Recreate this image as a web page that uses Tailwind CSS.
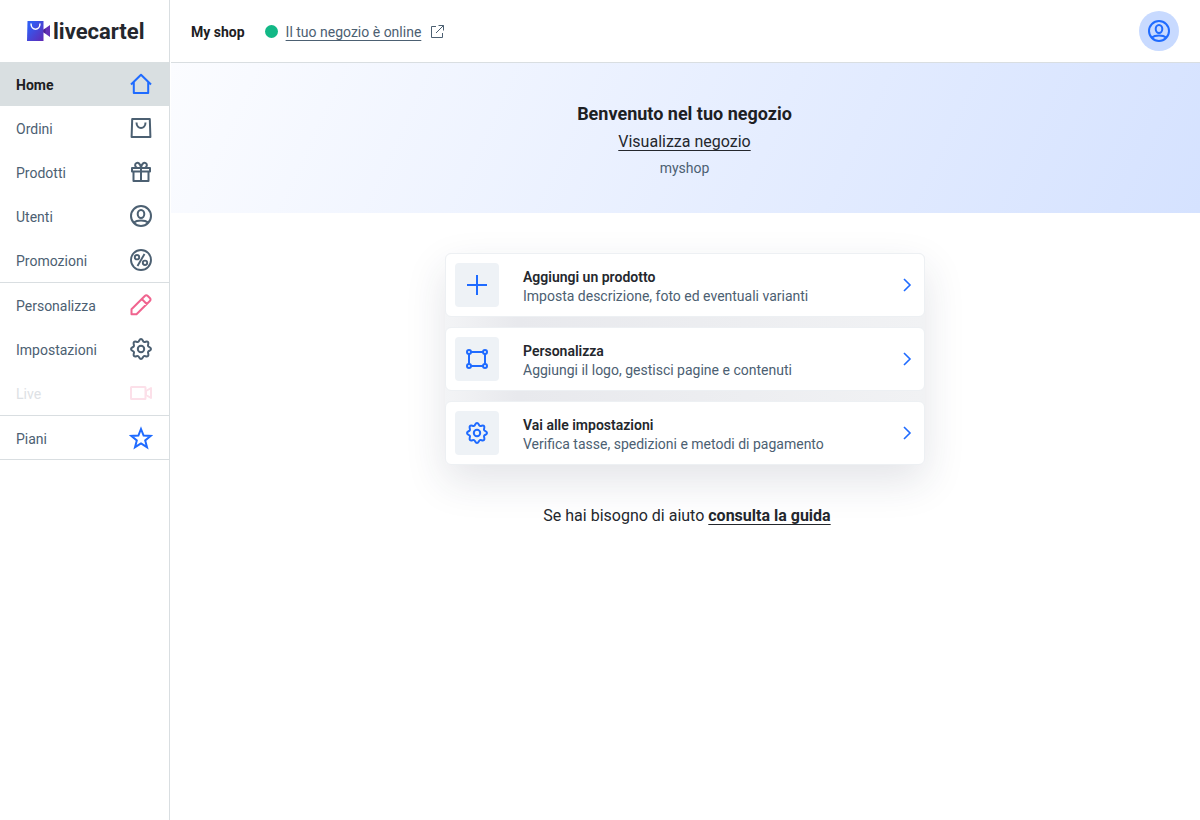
<!DOCTYPE html>
<html lang="it">
<head>
<meta charset="utf-8">
<meta name="viewport" content="width=device-width, initial-scale=1">
<title>Livecartel</title>
<script src="https://cdn.jsdelivr.net/npm/@tailwindcss/browser@4"></script>
</head>
<body class="flex min-h-screen bg-white font-['Roboto','Noto_Sans',sans-serif] text-sm text-[#4c6072]">
<svg class="hidden" aria-hidden="true">
  <symbol id="user" viewBox="0 0 24 24" fill="none" stroke="currentColor" stroke-width="2"><circle cx="12" cy="12" r="10"/><ellipse cx="12" cy="10" rx="3.300" ry="4"/><path d="M4.600 18.600C6.500 17.200 9 16.600 12 16.600s5.500.6 7.400 2"/></symbol>
  <symbol id="gear" viewBox="0 0 24 24" fill="none" stroke="currentColor" stroke-width="2" stroke-linejoin="round"><circle cx="12" cy="12" r="3.200"/><path d="M12 2C13.800 2 13.600 4.300 14.900 4.900S17.800 3.700 19 5s-.5 2.800.1 4.100S22 10.200 22 12s-2.400 1.600-2.900 2.900S20.300 17.700 19 19s-2.800-.5-4.100.1S13.800 22 12 22s-1.600-2.400-2.900-2.900S6.300 20.300 5 19s.5-2.800-.1-4.100S2 13.800 2 12s2.400-1.600 2.900-2.900S3.700 6.300 5 5s2.800.5 4.100-.1S10.200 2 12 2z"/></symbol>
  <symbol id="chevron" viewBox="0 0 16 16" fill="none" stroke="currentColor" stroke-width="1.600"><path d="M5 2l6 6-6 6"/></symbol>
</svg>

<aside class="w-[170px] shrink-0 border-r border-[#d9dee1]">
  <a href="#" aria-label="livecartel" class="flex h-[62px] items-center gap-0.5 pl-[27px] text-[#24272d]">
    <svg class="h-5 w-6 shrink-0" viewBox="0 0 24 20">
      <defs><linearGradient id="bag" x1="0" y1="0" x2="1" y2="1"><stop offset=".2" stop-color="#315cf2"/><stop offset="1" stop-color="#6129b4"/></linearGradient></defs>
      <path d="M.5 0H16.500v20H0z" fill="url(#bag)"/><path d="M16 9L23 4v12l-7-5z" fill="#6330b6"/><path d="M16.500 8.500l2-1v5l-2-1z" fill="#492395"/>
      <path d="M4 2.500c0 7.500 9 7.500 9 0" fill="none" stroke="#fff" stroke-width="1.500"/>
    </svg>
    <span class="pt-0.5 text-[22px] leading-6 font-bold">livecartel</span>
  </a>
  <nav aria-label="Menu principale">
    <ul class="border-b border-[#d9dee1]">
      <li><a href="#" aria-current="page" class="flex h-11 items-center justify-between bg-[#d9dfe1] px-4 font-bold text-[#1d2023]"><span class="pt-0.5">Home</span>
        <svg class="size-6 text-[#1f6bff]" viewBox="0 0 24 24" fill="none" stroke="currentColor" stroke-width="2" stroke-linejoin="round"><path d="M2 12.500L12 2.800 22 12.500M4.800 10v11h14.400V10"/></svg></a></li>
      <li><a href="#" class="flex h-11 items-center justify-between px-4"><span class="pt-0.5">Ordini</span>
        <svg class="size-6" viewBox="0 0 24 24" fill="none" stroke="currentColor" stroke-width="2" stroke-linejoin="round"><path d="M3.200 3h17.600l.6 18H2.600zM7.500 6.500c0 7.300 9 7.300 9 0"/></svg></a></li>
      <li><a href="#" class="flex h-11 items-center justify-between px-4"><span class="pt-0.5">Prodotti</span>
        <svg class="size-6" viewBox="0 0 24 24" fill="none" stroke="currentColor" stroke-width="2" stroke-linejoin="round"><path d="M3 8h18v3.500H3zM4.500 11.500V21h15v-9.500M12 8v13M12 7.500c-1-4.500-3-5.200-4.700-4.300C5.300 4.300 6 6.800 8 7.800M12 7.500c1-4.500 3-5.200 4.700-4.300C18.700 4.300 18 6.800 16 7.800"/></svg></a></li>
      <li><a href="#" class="flex h-11 items-center justify-between px-4"><span class="pt-0.5">Utenti</span>
        <svg class="size-6"><use href="#user"/></svg></a></li>
      <li><a href="#" class="flex h-11 items-center justify-between px-4"><span class="pt-0.5">Promozioni</span>
        <svg class="size-6" viewBox="0 0 24 24" fill="none" stroke="currentColor" stroke-width="1.900"><circle cx="12" cy="12" r="10"/><circle cx="8" cy="9.200" r="2.200"/><circle cx="16" cy="14.800" r="2.200"/><path d="M15.500 6l-7 12"/></svg></a></li>
    </ul>
    <ul class="border-b border-[#d9dee1]">
      <li><a href="#" class="flex h-11 items-center justify-between px-4"><span class="pt-0.5">Personalizza</span>
        <svg class="size-6 text-[#f0648f]" viewBox="0 0 24 24" fill="none" stroke="currentColor" stroke-width="2" stroke-linejoin="round"><path d="M2.500 21.300v-5L15.800 3c1-1 2-1 3 0l2 2c1 1 1 2 0 3L7.500 21.300zM12.800 6l5.200 5.200"/></svg></a></li>
      <li><a href="#" class="flex h-11 items-center justify-between px-4"><span class="pt-0.5">Impostazioni</span>
        <svg class="size-6"><use href="#gear"/></svg></a></li>
      <li><a href="#" aria-disabled="true" class="flex h-11 items-center justify-between px-4 text-[#dde1e5]"><span class="pt-0.5">Live</span>
        <svg class="size-6 text-[#fce0e9]" viewBox="0 0 24 24" fill="none" stroke="currentColor" stroke-width="2" stroke-linejoin="round"><rect x="2" y="6" width="14.500" height="12" rx=".5"/><path d="M17 10l5-3v10l-5-3z"/></svg></a></li>
    </ul>
    <ul class="border-b border-[#d9dee1]">
      <li><a href="#" class="flex h-[43px] items-center justify-between px-4"><span class="pt-0.5">Piani</span>
        <svg class="size-6 text-[#1f6bff]" viewBox="0 0 24 24" fill="none" stroke="currentColor" stroke-width="2"><path d="M12 3l2.600 6.500 7 .4-5.400 4.500 1.800 6.800-6-3.800-6 3.800 1.800-6.800L2.400 9.900l7-.4z"/></svg></a></li>
    </ul>
  </nav>
</aside>

<div class="ml-px flex-1">
  <header class="flex h-[63px] items-center border-b border-[#d9dee1] pr-[21px] pl-5">
    <strong class="pt-0.5 font-bold text-[#1d2023]">My shop</strong>
    <span class="ml-5 size-[13px] rounded-full bg-[#12b886]"></span>
    <a href="#" class="ml-2 flex items-center gap-2.5"><span class="pt-0.5 underline underline-offset-3">Il tuo negozio è online</span>
      <svg class="size-[13px]" viewBox="0 0 13 13" fill="none" stroke="currentColor" stroke-width="1"><path d="M5 1.500H.5v11h11V8M7.500.5h5v5M12.500.5L5 8"/></svg></a>
    <button type="button" aria-label="Profilo" class="ml-auto flex size-10 items-center justify-center rounded-full bg-[#c8daff] text-[#1f6bff]"><svg class="size-6"><use href="#user"/></svg></button>
  </header>
  <main>
    <section class="flex h-[150px] flex-col items-center bg-linear-115 from-[#fbfcff] to-[#d5e2ff] pt-[37px] pr-0.5">
      <h1 class="text-lg leading-7 font-bold text-[#1d2023]">Benvenuto nel tuo negozio</h1>
      <a href="#" class="text-base leading-7 text-[#24272d] underline underline-offset-3">Visualizza negozio</a>
      <p class="leading-6">myshop</p>
    </section>
    <div class="pt-10 pr-px">
    <ul class="mx-auto flex max-w-[480px] flex-col gap-2.5 rounded-md bg-linear-to-r from-[#f3f4f6] from-0% via-[#e8e9ed] via-15% to-[#f1f2f4] to-100% shadow-[0_16px_40px_rgba(40,50,80,0.13)]">
      <li><a href="#" class="flex h-16 items-center rounded-md border border-[#edf0f3] bg-white pr-[9px] pl-[9px]">
        <span class="flex size-11 items-center justify-center rounded bg-[#eef2f6] text-[#1f6bff]"><svg class="size-6" viewBox="0 0 24 24" stroke="currentColor" stroke-width="2"><path d="M12 2v20M2 12h20"/></svg></span>
        <span class="ml-6 flex-1 pt-[3px]"><strong class="block leading-[19px] font-semibold text-[#24272d]">Aggiungi un prodotto</strong><span class="block leading-[19px]">Imposta descrizione, foto ed eventuali varianti</span></span>
        <svg class="size-4 text-[#1f6bff]"><use href="#chevron"/></svg></a></li>
      <li><a href="#" class="flex h-16 items-center rounded-md border border-[#edf0f3] bg-white pr-[9px] pl-[9px]">
        <span class="flex size-11 items-center justify-center rounded bg-[#eef2f6] text-[#1f6bff]"><svg class="size-6" viewBox="0 0 24 24" fill="none" stroke="currentColor" stroke-width="2"><circle cx="4" cy="5" r="2"/><circle cx="20" cy="5" r="2"/><circle cx="4" cy="19" r="2"/><circle cx="20" cy="19" r="2"/><path d="M6 5h12M6 19h12M4 7v10M20 7v10"/></svg></span>
        <span class="ml-6 flex-1 pt-[3px]"><strong class="block leading-[19px] font-semibold text-[#24272d]">Personalizza</strong><span class="block leading-[19px]">Aggiungi il logo, gestisci pagine e contenuti</span></span>
        <svg class="size-4 text-[#1f6bff]"><use href="#chevron"/></svg></a></li>
      <li><a href="#" class="flex h-16 items-center rounded-md border border-[#edf0f3] bg-white pr-[9px] pl-[9px]">
        <span class="flex size-11 items-center justify-center rounded bg-[#eef2f6] text-[#1f6bff]"><svg class="size-6"><use href="#gear"/></svg></span>
        <span class="ml-6 flex-1 pt-[3px]"><strong class="block leading-[19px] font-semibold text-[#24272d]">Vai alle impostazioni</strong><span class="block leading-[19px]">Verifica tasse, spedizioni e metodi di pagamento</span></span>
        <svg class="size-4 text-[#1f6bff]"><use href="#chevron"/></svg></a></li>
    </ul>
    <p class="mt-[39px] pl-1 text-center text-base leading-6 text-[#24272d]">Se hai bisogno di aiuto <a href="#" class="font-bold underline underline-offset-3">consulta la guida</a></p>
    </div>
  </main>
</div>
</body>
</html>
